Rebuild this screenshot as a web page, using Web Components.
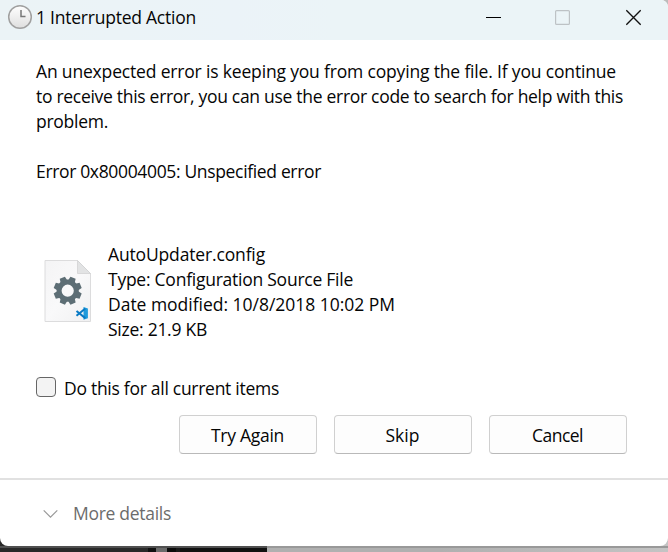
<!DOCTYPE html>
<html lang="en">
<head>
<meta charset="utf-8">
<title>1 Interrupted Action</title>
<style>
html,body{margin:0;height:552px;overflow:hidden}
body{font:17.5px/25px "Open Sans","Noto Sans",sans-serif;color:#050505;
background:linear-gradient(#505050 0 2px,#0000 2px) 0 546px/267px 6px no-repeat,
linear-gradient(#999 0 2px,#0000 2px) 267px 546px/401px 6px no-repeat,
linear-gradient(90deg,#292929 0 148px,#101010 148px 156px,#6b6b6b 156px 167px,#0b0b0b 167px 176px,#191919 176px 180px,#111 180px 267px,#b0b0b0 267px 440px,#c4c4c4) 0 542px/668px 10px no-repeat,
linear-gradient(90deg,#333 0 50%,#bcbcbc 50%)}
</style>
</head>
<body>
<error-dialog></error-dialog>
<script>
function define(name, html, setup) {
  const t = document.createElement('template');
  t.innerHTML = html;
  customElements.define(name, class extends HTMLElement {
    connectedCallback() {
      if (this.shadowRoot) return;
      this.attachShadow({mode: 'open'}).append(t.content.cloneNode(true));
      if (setup) setup(this);
    }
  });
}

// A single line of text whose tracking is tuned to a given advance width.
define('text-line', `<style>:host{display:block;white-space:nowrap}span{display:inline-block}</style><span><slot></slot></span>`, el => {
  const s = el.shadowRoot.querySelector('span');
  const w = s.getBoundingClientRect().width, n = el.textContent.length;
  s.style.letterSpacing = ((+el.getAttribute('width') - w) / n) + 'px';
});

define('clock-icon', `<style>:host{display:block;width:26px;height:26px}svg{display:block}</style>
<svg width="26" height="26" viewBox="0 0 26 26"><defs><linearGradient id="g" x2="0" y2="1"><stop stop-color="#fff"/><stop offset="1" stop-color="#dedede"/></linearGradient></defs>
<circle cx="13" cy="13" r="11.3" fill="url(#g)" stroke="#a0a0a0" stroke-width="1.5"/><path d="M14 6v6.5h4.5" fill="none" stroke="#777" stroke-width="1.5"/></svg>`);

define('window-controls', `<style>:host{display:flex;width:210px;height:35px}svg{display:block;width:70px;height:35px;fill:none}</style>
<svg><path d="M28 17.5h15" stroke="#000"/></svg>
<svg><rect x="27.6" y="10.6" width="13.8" height="13.8" rx="1" stroke="#bdc2c5" stroke-width="1.2"/></svg>
<svg><path d="M28.3 10.3l14.4 14.4M42.7 10.3l-14.4 14.4" stroke="#111" stroke-width="1.35"/></svg>`);

define('title-bar', `<style>:host{display:flex;height:40px;box-sizing:border-box;background:linear-gradient(90deg,#ebf3f6,#ebf3f8 35%,#ebf4f7 50%);align-items:flex-start;padding-left:7px}
clock-icon{margin-top:4px}::slotted(*){margin:5px 0 0 3px;flex:1}</style>
<clock-icon></clock-icon><slot></slot><window-controls></window-controls>`);

define('config-icon', `<style>:host{display:block;width:48px;height:63px}svg{display:block}</style>
<svg width="48" height="63" viewBox="0 0 48 63"><defs><linearGradient id="p" x2="1" y2="1"><stop stop-color="#f4f4f5"/><stop offset=".5" stop-color="#f9f9fa"/><stop offset="1" stop-color="#f0f0f1"/></linearGradient></defs>
<path d="M1 .5h32.5l13 13v48H1z" fill="url(#p)" stroke="#dcdcdd"/><path d="M33.5.5v13h13z" fill="#e2e3e4" stroke="#cfcfd0" stroke-width=".7"/>
<g transform="translate(23.7 30.7)" fill="#5d6e75"><circle r="8.6" fill="none" stroke="#5d6e75" stroke-width="5"/>
<g id="teeth"></g></g>
<g transform="translate(31.5 47)"><path d="M8 0l4.4 1.5v9.8L8 12.8z" fill="#209bdc"/><path d="M9.8 1.6L1 8.8M9.8 11.1L1 4" fill="none" stroke="#087ac5" stroke-width="2"/></g></svg>`, el => {
  const g = el.shadowRoot.querySelector('#teeth');
  for (let i = 0; i < 8; i++) {
    const p = document.createElementNS('http://www.w3.org/2000/svg', 'path');
    p.setAttribute('d', 'M-3.6-9.5l.8-4.5h5.6l.8 4.5z');
    p.setAttribute('transform', `rotate(${i * 45 + 22.5})`);
    g.append(p);
  }
});

define('file-info', `<style>:host{display:flex;gap:16px;padding-left:8px}config-icon{margin-top:18px}</style><config-icon></config-icon><div><slot></slot></div>`);

define('check-option', `<style>:host{display:flex;gap:8px;height:25px}i{display:block;box-sizing:border-box;width:20px;height:20px;border:1px solid #666;border-radius:4px;background:#f3f3f3;margin-top:1px}</style><i></i><slot></slot>`);

define('push-button', `<style>:host{display:block;width:138px;height:39px}button{display:flex;align-items:flex-start;justify-content:center;box-sizing:border-box;width:100%;height:100%;margin:0;padding:7px 1px 0 0;font:inherit;color:inherit;border:1px solid #d0d0d0;border-bottom-color:#b9b9b9;border-radius:4px;background:#fdfdfd}</style><button><slot></slot></button>`);

define('details-bar', `<style>:host{display:flex;box-sizing:border-box;height:68px;border-top:2px solid #e1e1e1;padding:21px 0 0 43px;gap:15px;color:#6c6c6c}svg{display:block;margin-top:8px}</style>
<svg width="15" height="10" fill="none"><path d="M.7 1.3l6.8 6.9 6.8-6.9" stroke="#999" stroke-width="1.2"/></svg><slot></slot>`);

define('error-dialog', `<style>:host{display:flex;flex-direction:column;height:546px;background:#fff;border-radius:0 7px 8px 8px;overflow:hidden}
main{height:438px;box-sizing:border-box;padding:19px 36px 0}
.msg{height:183px}.err{margin-top:25px}check-option{margin-top:34px}
.buttons{display:flex;gap:17px;padding-left:143px;margin-top:14px}</style>
<title-bar><text-line width="160">1 Interrupted Action</text-line></title-bar>
<main><div class="msg"><text-line width="580">An unexpected error is keeping you from copying the file. If you continue</text-line>
<text-line width="587">to receive this error, you can use the error code to search for help with this</text-line>
<text-line width="72">problem.</text-line><text-line class="err" width="285">Error 0x80004005: Unspecified error</text-line></div>
<file-info><text-line width="157">AutoUpdater.config</text-line><text-line width="245">Type: Configuration Source File</text-line><text-line width="287">Date modified: 10/8/2018 10:02 PM</text-line><text-line width="99">Size: 21.9 KB</text-line></file-info>
<check-option><text-line width="215">Do this for all current items</text-line></check-option>
<div class="buttons"><push-button><text-line width="73">Try Again</text-line></push-button><push-button><text-line width="34">Skip</text-line></push-button><push-button><text-line width="51">Cancel</text-line></push-button></div></main>
<details-bar><text-line width="98">More details</text-line></details-bar>`);
</script>
</body>
</html>
